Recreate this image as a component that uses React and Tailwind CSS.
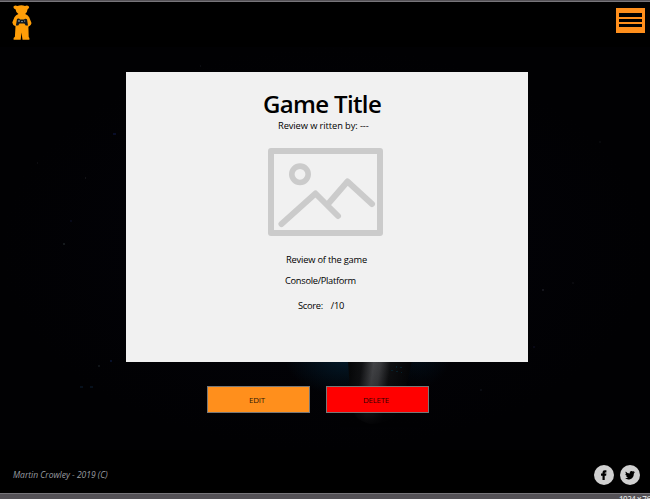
const stars = [
  [113, 134, 3, '#080d28'], [85, 178, 1, '#121216'], [63, 244, 2, '#15191c'], [70, 221, 2, '#070918'],
  [37, 163, 1, '#0c0c10'], [110, 361, 2, '#07102a'], [98, 366, 2, '#101418'], [80, 387, 3, '#06101c'],
  [90, 387, 3, '#06101c'], [542, 290, 2, '#15151c'], [572, 283, 2, '#0a0a0e'], [533, 347, 2, '#080816'],
  [480, 390, 2, '#0a0c12'], [200, 66, 1, '#0b0c10'], [599, 142, 2, '#08090c'],
];

function Backdrop() {
  return (
    <svg className="absolute inset-0" width="650" height="403" viewBox="0 47 650 403">
      <defs>
        <radialGradient id="haze">
          <stop offset="0" stopColor="#03030a" />
          <stop offset="1" stopColor="#010103" />
        </radialGradient>
        <radialGradient id="blue">
          <stop offset="0" stopColor="#031b2b" />
          <stop offset="1" stopColor="#031b2b" stopOpacity="0" />
        </radialGradient>
        <linearGradient id="beam" gradientUnits="userSpaceOnUse" x1="348" y1="361" x2="412" y2="370">
          <stop offset="0" stopColor="#040506" />
          <stop offset=".22" stopColor="#101113" />
          <stop offset=".4" stopColor="#434447" />
          <stop offset=".5" stopColor="#3a3b3e" />
          <stop offset=".66" stopColor="#0e0f11" />
          <stop offset="1" stopColor="#030406" />
        </linearGradient>
        <linearGradient id="fade" x2="0" y2="1">
          <stop offset="0" stopColor="#010103" stopOpacity="0" />
          <stop offset=".35" stopColor="#010103" stopOpacity=".15" />
          <stop offset=".75" stopColor="#010103" stopOpacity=".75" />
          <stop offset="1" stopColor="#010103" />
        </linearGradient>
      </defs>
      <rect y="47" width="650" height="403" fill="url(#haze)" />
      <ellipse cx="346" cy="356" rx="62" ry="40" fill="url(#blue)" />
      <ellipse cx="418" cy="352" rx="34" ry="36" fill="url(#blue)" opacity=".5" />
      <path d="M348 361H412L402 405Q394 424 370 424Q353 420 351 405Z" fill="url(#beam)" />
      <rect x="340" y="361" width="80" height="66" fill="url(#fade)" />
      <g fill="#06202a">
        <rect x="391" y="370" width="2" height="1" />
        <rect x="396" y="366" width="1" height="2" />
        <rect x="400" y="367" width="2" height="1" />
        <rect x="396" y="371" width="2" height="1" />
        <rect x="401" y="372" width="1" height="1" />
      </g>
      {stars.map(([x, y, s, c]) => <rect key={`${x}-${y}`} x={x} y={y - 1} width={s} height="2" fill={c} />)}
    </svg>
  );
}

function Bear() {
  return (
    <svg width="20" height="36" viewBox="0 0 20 36" aria-label="Home">
      <path fill="#ff9e08" d="M1.7 1.2Q3.4-.3 5.3 1Q9.5-.3 13 1Q15.2-.3 16.9 1.5Q17.7 3.2 15.5 4.4Q15.4 7 13.2 9Q15.8 10 17.2 12.3L19.4 17.7Q19.9 20 16.4 21.8L16.7 32.1L17.4 33V34.7H10.5L9.5 27.5L8.7 34.7H1.6V33L2.9 31.8L3.5 21.3Q.4 19.8.3 17.6L2.4 12.2Q3.9 9.7 6.4 9Q3.6 7.2 3.7 4.6Q.7 3.4 1.7 1.2Z" />
      <path fill="#101820" d="M5 14Q7 13 8 14.4H12Q13.4 13 15 14.3L16 20.5H13.7L12.4 18.4H7.5L6.2 20.5H3.9Z" />
      <path stroke="#a9bcc4" strokeWidth=".7" d="M6.2 16H7.8M7 15.2V16.8M12.7 15.4V16.8M9 16.6H11" />
    </svg>
  );
}

function ImagePlaceholder() {
  return (
    <svg className="mx-auto block" width="115" height="88" viewBox="0 0 115 88" fill="none" stroke="#cbcbcb" strokeWidth="6" strokeLinecap="round" strokeLinejoin="round">
      <rect x="3" y="3" width="109" height="82" />
      <circle cx="32" cy="26.3" r="8.2" strokeWidth="5.6" />
      <path d="M13.5 76L47.5 45.5L70 68M60 56L79.5 33.5L104 56" />
    </svg>
  );
}

function Social({ children, label }) {
  return (
    <a aria-label={label} className="flex size-5 items-center justify-center rounded-full bg-[#d0d0d0]">{children}</a>
  );
}

export default function App() {
  return (
    <div className="flex h-[499px] w-[650px] flex-col overflow-hidden bg-black font-['Open_Sans',sans-serif] text-black">
      <div className="h-[2px] shrink-0 border-b border-[#77757a] bg-[#545156]" />
      <header className="flex h-[45px] shrink-0 items-start justify-between pt-[3px] pr-[5px] pl-3">
        <Bear />
        <button aria-label="Menu" className="mt-[3px] flex h-[25px] w-[29px] flex-col items-center gap-[2px] bg-[#ff8f1c] pt-[5px]">
          <span className="h-1 w-[23px] bg-black" />
          <span className="h-[3px] w-[23px] bg-black" />
          <span className="h-[3px] w-[23px] bg-black" />
        </button>
      </header>

      <main className="relative h-[403px] shrink-0 pt-[25px]">
        <Backdrop />
        <section className="relative ml-[126px] h-[290px] w-[402px] bg-[#f1f1f1] pt-4 text-[9.3px] leading-3">
          <h1 className="ml-[137px] h-8 text-[24px] leading-8 font-semibold tracking-[-0.65px] whitespace-nowrap">Game Title</h1>
          <p className="ml-[152px] tracking-[-0.09px] whitespace-pre">Review w ritten by: ---</p>
          <div className="mt-4 pr-[3px]"><ImagePlaceholder /></div>
          <p className="mt-[18px] ml-[160px] tracking-[-0.2px]">Review of the game</p>
          <p className="mt-[9px] ml-[159px] tracking-[-0.3px]">Console/Platform</p>
          <p className="mt-[13px] ml-[172px] flex gap-2 tracking-[-0.3px]"><span>Score:</span><span>/10</span></p>
        </section>
        <div className="relative mt-6 ml-[207px] flex gap-4 text-[8px]">
          <button className="h-[27px] w-[103px] border border-[#777] bg-[#ff8f1c] pr-[3px] tracking-[-0.2px] text-black/85">EDIT</button>
          <button className="h-[27px] w-[103px] border border-[#777] bg-[#ff0000] pr-[3px] tracking-[-0.3px] text-black/85">DELETE</button>
        </div>
      </main>

      <footer className="flex h-[43px] shrink-0 items-center justify-between pt-[7px] pr-[10px] pl-[13px]">
        <p className="text-[8.5px] text-[#9a9da2] italic">Martin Crowley - 2019 (C)</p>
        <div className="flex gap-[6px]">
          <Social label="Facebook">
            <svg width="20" height="20" viewBox="0 0 20 20"><path d="M8.5 15V10.7H7V8.5H8.5V7.4Q8.5 5.2 10.8 5.2H12.4V7.4H11.4Q10.7 7.4 10.7 8.1V8.5H12.4L12.1 10.7H10.7V15Z" /></svg>
          </Social>
          <Social label="Twitter">
            <svg width="20" height="20" viewBox="0 0 20 20"><path d="M5.7 6.5Q7.2 8.3 9.7 8.5Q9.3 6.1 11.3 5.9Q12.3 5.8 13 6.5L14.5 6L13.7 7.3L15 7L13.9 8.4Q13.7 12.8 10.1 14.2Q7.4 15 5 13.3Q6.8 13.4 8 12.5Q6.6 12.2 6.1 11H7Q5.5 10.4 5.3 8.9L6.2 9.1Q5.1 8 5.7 6.5Z" /></svg>
          </Social>
        </div>
      </footer>
      <div className="h-[7px] shrink-0 overflow-hidden border-t border-[#77757a] bg-[#545156] pl-[619px] text-[8px] leading-[10px] font-semibold tracking-[-0.5px] whitespace-nowrap text-[#dddddd]">1024 x 76</div>
    </div>
  );
}
